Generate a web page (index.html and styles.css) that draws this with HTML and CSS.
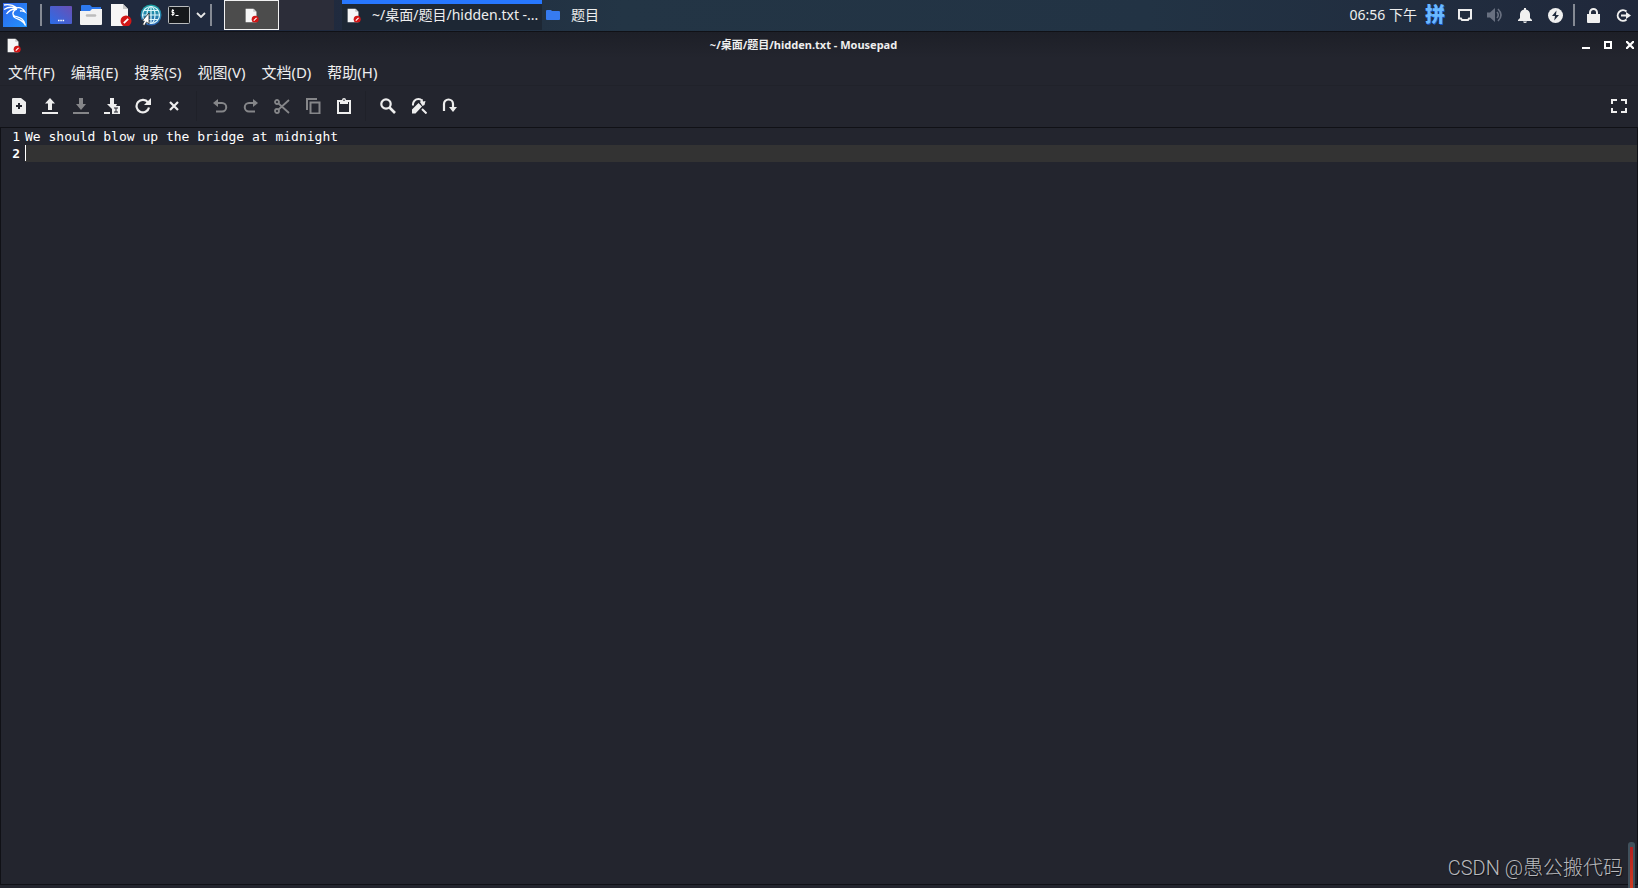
FILE: index.html
```html
<!DOCTYPE html>
<html lang="zh-CN">
<head>
<meta charset="utf-8">
<title>~/桌面/题目/hidden.txt - Mousepad</title>
<link rel="stylesheet" href="styles.css">
</head>
<body>
<svg class="defs" aria-hidden="true">
  <defs>
    <linearGradient id="g-kali" x1="0" y1="0" x2="1" y2="1"><stop offset="0" stop-color="#2e62e8"/><stop offset="1" stop-color="#2295ff"/></linearGradient>
    <linearGradient id="g-desk" x1="0" y1="1" x2="1" y2="0"><stop offset="0" stop-color="#2a6de8"/><stop offset="1" stop-color="#6a4fb4"/></linearGradient>
    <linearGradient id="g-globe" x1="0" y1="0" x2="0" y2="1"><stop offset="0" stop-color="#1ba5a4"/><stop offset="1" stop-color="#2b62b4"/></linearGradient>
    <symbol id="mousepad" viewBox="0 0 22 22">
      <path d="M1 0h12l5 5v17H1z" fill="#f6f6f6"/><path d="M13 0l5 5h-5z" fill="#c9c9c9"/>
      <circle cx="16" cy="17" r="5.5" fill="#d31717"/><path d="M13.8 19.2l4.4-4.4" stroke="#fff" stroke-width="1.8"/>
    </symbol>
  </defs>
</svg>
<header class="panel">
  <div class="launchers">
    <button class="launch" aria-label="Kali"><svg width="24" height="24" viewBox="0 0 24 24"><path d="M0 0h24v24H0z" fill="url(#g-kali)"/><path d="M1 2c5-1 9 0 13 3M1 6.500c4-2.500 8-3 12-1M3.500 11c2-3 5-5 9.500-5M13 5c4-1 7 .5 9 4-2-1.200-3-1.500-5-1M14 6c-4 1-5.500 5-2.500 7 4 1.500 9.500 1.500 11 9.500-2-5-6-5.500-10-7.500-4-2.500-3-7.500 1-9" fill="none" stroke="#fff" stroke-width="1.300"/></svg></button>
    <span class="divider"></span>
    <button class="launch" aria-label="显示桌面"><svg width="22" height="18" viewBox="0 0 22 18"><rect width="22" height="18" rx="1" fill="url(#g-desk)"/><path d="M8 14.500h1.500M10.300 14.500h1.500M12.600 14.500h1.500" stroke="#fff" stroke-width="1.500"/></svg></button>
    <button class="launch" aria-label="文件管理器"><svg width="22" height="20" viewBox="0 0 22 20"><path d="M1 1q0-1 1-1h8l2 2h9v7H1z" fill="#2d79ee"/><path d="M0 6h10l2-2h10v15q0 1-1 1H1q-1 0-1-1z" fill="#f2f2f2"/><path d="M7 10.500h8" stroke="#bcbcbc" stroke-width="2.500" stroke-linecap="round"/></svg></button>
    <button class="launch" aria-label="Mousepad"><svg width="22" height="22"><use href="#mousepad"/></svg></button>
    <button class="launch" aria-label="浏览器"><svg width="22" height="22" viewBox="0 0 22 22"><circle cx="11" cy="11" r="10.500" fill="url(#g-globe)"/><g fill="none" stroke="#d9f5fb" stroke-width="1.200"><circle cx="11" cy="11" r="8.500"/><ellipse cx="11" cy="11" rx="4" ry="8.500"/><path d="M11 2.500v17M2.500 11h17M4 6.500h14M4 15.500h14"/></g><path d="M9 9v11l-2.500-2-2 3.500-2-1 1.800-3.500H2z" fill="#fff" stroke="#222" stroke-width=".8"/></svg></button>
    <button class="launch terminal" aria-label="终端"><svg width="22" height="18" viewBox="0 0 22 18"><rect x=".5" y=".5" width="21" height="17" rx="1" fill="#15181b" stroke="#b9bcbe"/><path d="M6 4.500H4v2h2v2H3.500M4.800 3v7M7.500 9.500h3" fill="none" stroke="#fff"/></svg></button>
    <button class="more" aria-label="更多终端"><svg width="10" height="6" viewBox="0 0 10 6"><path d="M1 1l4 4 4-4" fill="none" stroke="#e8e8e8" stroke-width="1.800"/></svg></button>
    <span class="divider"></span>
  </div>
  <div class="pager">
    <button class="space current" aria-label="工作区 1"><svg width="14" height="15" viewBox="0 0 22 22"><use href="#mousepad"/></svg></button>
    <button class="space" aria-label="工作区 2"></button>
  </div>
  <nav class="tasks">
    <button class="task active"><svg width="14" height="15" viewBox="0 0 22 22"><use href="#mousepad"/></svg><span>~/桌面/题目/hidden.txt -...</span></button>
    <button class="task"><svg width="14" height="10" viewBox="0 0 14 10"><path d="M0 1q0-1 1-1h4l1 1h7q1 0 1 1v7q0 1-1 1H1q-1 0-1-1z" fill="#367bf0"/></svg><span>题目</span></button>
  </nav>
  <div class="tray">
    <time class="clock">06:56 下午</time>
    <button class="pinyin">拼</button>
    <button class="status" aria-label="显示"><svg width="14" height="12" viewBox="0 0 14 12"><path d="M1 1h12v8.500h-2l-1 1.500H4L3 9.500H1z" fill="none" stroke="#eee" stroke-width="2"/></svg></button>
    <button class="status dim" aria-label="音量"><svg width="16" height="14" viewBox="0 0 16 14"><path d="M0 4.500h3L8 0v14L3 9.500H0z" fill="currentColor"/><path d="M10 4q2.500 3 0 6M11 1q6 6 0 12" fill="none" stroke="currentColor" stroke-width="1.600"/></svg></button>
    <button class="status" aria-label="通知"><svg width="14" height="15" viewBox="0 0 14 15"><path d="M6 0h2v1.500c3 .5 4 3 4 5V10l2 2v1H0v-1l2-2V6.500c0-2 1-4.500 4-5zM5 13.500h4Q8.500 15 7 15t-2-1.500z" fill="#f0f0f0"/></svg></button>
    <button class="status" aria-label="电源"><svg width="15" height="15" viewBox="0 0 15 15"><circle cx="7.500" cy="7.500" r="7.500" fill="#f0f0f0"/><path d="M8.500 2.500L4 8h3l-.8 4.500L11 7H8z" fill="#202b3e"/></svg></button>
    <span class="divider"></span>
    <button class="status" aria-label="锁定"><svg width="13" height="15" viewBox="0 0 13 15"><path d="M0 6h13v8q0 1-1 1H1q-1 0-1-1z" fill="#f0f0f0"/><path d="M3 6V4.500a3.500 3.500 0 0 1 7 0V6" fill="none" stroke="#f0f0f0" stroke-width="2"/></svg></button>
    <button class="status" aria-label="注销"><svg width="15" height="13" viewBox="0 0 15 13"><path d="M10.500 2.500A5.300 5.300 0 1 0 10.500 10.500" fill="none" stroke="#f0f0f0" stroke-width="2"/><path d="M5 5.500h5V3l5 3.500-5 3.500V7.500H5z" fill="#f0f0f0"/></svg></button>
  </div>
</header>
<main class="window">
  <div class="titlebar">
    <svg class="app-icon" width="14" height="15" viewBox="0 0 22 22"><use href="#mousepad"/></svg>
    <h1>~/桌面/题目/hidden.txt - Mousepad</h1>
    <div class="controls">
      <button aria-label="最小化"><svg width="8" height="8"><path d="M0 6h8v2H0z"/></svg></button>
      <button aria-label="最大化"><svg width="8" height="8"><path d="M1 1h6v6H1z" fill="none" stroke="#fff" stroke-width="2"/></svg></button>
      <button aria-label="关闭窗口"><svg width="8" height="8"><path d="M0 0l8 8M8 0L0 8" stroke="#fff" stroke-width="2.200"/></svg></button>
    </div>
  </div>
  <nav class="menubar">
    <button>文件(F)</button><button>编辑(E)</button><button>搜索(S)</button><button>视图(V)</button><button>文档(D)</button><button>帮助(H)</button>
  </nav>
  <div class="toolbar" role="toolbar">
    <button aria-label="新建"><svg viewBox="0 0 16 16"><path fill="currentColor" fill-rule="evenodd" d="M2 0h8l5 4v11q0 1-1 1H2q-1 0-1-1V1q0-1 1-1zm5 5v2H5v2h2v2h2V9h2V7H9V5z"/></svg></button>
    <button aria-label="打开"><svg viewBox="0 0 16 16"><path fill="currentColor" d="M8 0l5 5.500h-3V12H6V5.500H3zM0 14h16v2H0z"/></svg></button>
    <button class="dim" aria-label="保存"><svg viewBox="0 0 16 16"><path fill="currentColor" d="M6 0h4v6h3l-5 6-5-6h3zM0 14h16v2H0z"/></svg></button>
    <button aria-label="另存为"><svg viewBox="0 0 16 16"><path fill="currentColor" fill-rule="evenodd" d="M6 0h4v6h3l-1 2H8v3L3 6h3zM0 14h6v2H0zM8 8h8v8H8zm2 1.500v1h1.500v3H10v1h4v-1h-1.500v-3H14v-1z"/></svg></button>
    <button aria-label="重新载入"><svg viewBox="0 0 16 16"><path d="M13 4.500A6.300 6.300 0 1 0 14 9.500" fill="none" stroke="currentColor" stroke-width="2.200"/><path fill="currentColor" d="M16 0v7H9z"/></svg></button>
    <button aria-label="关闭文件"><svg viewBox="0 0 16 16"><path d="M4 4l8 8M12 4l-8 8" stroke="currentColor" stroke-width="2.200"/></svg></button>
    <span class="tool-divider"></span>
    <button class="dim" aria-label="撤销"><svg viewBox="0 0 16 16"><path fill="currentColor" d="M1 5l5-4v8z"/><path d="M5 5h5a4 4 0 0 1 0 8.500H4" fill="none" stroke="currentColor" stroke-width="2"/></svg></button>
    <button class="dim" aria-label="重做"><svg viewBox="0 0 16 16"><path fill="currentColor" d="M15 5l-5-4v8z"/><path d="M11 5H6a4 4 0 0 0 0 8.500h6" fill="none" stroke="currentColor" stroke-width="2"/></svg></button>
    <button class="dim" aria-label="剪切"><svg viewBox="0 0 16 16"><g fill="none" stroke="currentColor" stroke-width="1.800"><circle cx="3" cy="4" r="2"/><circle cx="3" cy="13" r="2"/><path d="M4.500 5.500L15 15M4.500 11.500L15 2"/></g></svg></button>
    <button class="dim" aria-label="复制"><svg viewBox="0 0 16 16"><path d="M2 12V1h10M5.500 4.500h9v11h-9z" fill="none" stroke="currentColor" stroke-width="2"/></svg></button>
    <button aria-label="粘贴"><svg viewBox="0 0 16 16"><path d="M2 3h12v12H2z" fill="none" stroke="currentColor" stroke-width="2"/><path fill="currentColor" d="M4 2h2a2 2 0 0 1 4 0h2v4H4z"/><circle cx="8" cy="2.200" r=".8" fill="#23252e"/></svg></button>
    <span class="tool-divider short"></span>
    <button aria-label="查找"><svg viewBox="0 0 16 16"><circle cx="6" cy="6" r="4.700" fill="none" stroke="currentColor" stroke-width="2.200"/><path d="M9.500 9.500l5.500 5.500" stroke="currentColor" stroke-width="2.600"/></svg></button>
    <button aria-label="替换"><svg viewBox="0 0 16 16"><path d="M2 7.500C1.500 3.500 4.500 1 7.500 1q2 0 3.500 1.500M11 11l4.500 4.500" fill="none" stroke="currentColor" stroke-width="2"/><path fill="currentColor" d="M1 15.500v-4l6.500-6.500 3.500 3.500-6.500 7zM9 4l2.500-3 .5 2.500 2.500-.5-1 4-2 1z"/></svg></button>
    <button aria-label="跳转"><svg viewBox="0 0 16 16"><path d="M2 13V6a4.500 4.500 0 0 1 9 0v5" fill="none" stroke="currentColor" stroke-width="2.200"/><path fill="currentColor" d="M7 9h8l-4 5z"/></svg></button>
    <button class="fullscreen" aria-label="全屏"><svg viewBox="0 0 16 16"><path d="M1 6V2h5M10 2h5v4M15 10v4h-5M6 14H1v-4" fill="none" stroke="currentColor" stroke-width="2"/></svg></button>
  </div>
  <section class="editor" aria-label="文本">
    <div class="line"><span class="number">1</span><code>We should blow up the bridge at midnight</code></div>
    <div class="line selected"><span class="number">2</span><code><i class="caret"></i></code></div>
  </section>
</main>
<div class="watermark">CSDN @愚公搬代码</div>
<div class="meter"></div>
</body>
</html>
```

FILE: styles.css
```css
* { box-sizing: border-box; }
body {
  margin: 0;
  min-height: 100vh;
  display: flex;
  flex-direction: column;
  background: #23252e;
  color: #eee;
  font: 15px/20px "Noto Sans", "Noto Sans CJK SC", sans-serif;
}
button {
  display: flex;
  align-items: center;
  justify-content: center;
  padding: 0;
  border: 0;
  background: none;
  color: inherit;
  font: inherit;
}
svg { display: block; flex: none; }
.defs { position: absolute; width: 0; height: 0; }
.panel {
  display: flex;
  height: 32px;
  border-bottom: 1px solid #101116;
  background: linear-gradient(90deg, #202a3e, #202a3e 20%, #233545 38%, #223344 70%, #20283b);
  font-size: 14px;
}
.launchers, .tray { display: flex; align-items: center; height: 30px; }
.launch { width: 30px; height: 29px; }
.terminal { width: 26px; }
.divider { width: 2px; height: 22px; margin: 0 4px 0 10px; background: #858a94; }
.more { width: 18px; height: 29px; }
.more + .divider { margin: 0 12px 0 0; }
.pager { display: flex; height: 30px; }
.space { width: 55px; }
.space:last-child { background: #2c2d39; }
.current { border: 1px solid #f2f2f2; background: #4c4c4c; }
.tasks { display: flex; flex: 1; height: 30px; margin-left: 8px; }
.task { gap: 11px; padding: 0 4px; white-space: nowrap; }
.active {
  width: 200px;
  justify-content: flex-start;
  padding: 0 0 0 5px;
  background: #1d2734;
  box-shadow: inset 0 4px #2777ff;
}
.clock { margin-right: 8px; }
.pinyin {
  width: 20px;
  margin-right: 5px;
  color: #69b9ff;
  font-size: 20px;
  font-weight: 900;
  text-shadow: 1px 1px #1555c7;
}
.status { width: 30px; height: 29px; }
.dim { color: #858689; }
.status.dim { color: #687080; }
.tray .divider { margin: 0 3px; }
.window { display: flex; flex: 1; flex-direction: column; }
.titlebar {
  display: grid;
  grid-template-columns: 60px 1fr 60px;
  align-items: center;
  height: 26px;
  padding: 0 4px 0 7px;
  background: linear-gradient(#1d1f27, #23252e);
}
h1 { margin: 0; padding-right: 34px; font-size: 11px; line-height: 20px; text-align: center; }
.controls { display: flex; justify-content: flex-end; gap: 14px; }
.controls svg { fill: #fff; }
.menubar { display: flex; gap: 16px; height: 28px; padding: 0 8px; border-bottom: 1px solid #20222a; }
.toolbar { display: flex; align-items: center; height: 41px; padding: 0 4px 1px 3px; }
.toolbar button { width: 31px; height: 38px; }
.toolbar svg { width: 16px; height: 16px; }
.tool-divider { width: 1px; height: 30px; margin: 0 7px; background: #1f2129; }
.short { margin: 0 6px; }
.toolbar .fullscreen { margin-left: auto; }
.editor {
  flex: 1;
  margin-bottom: 3px;
  border: 1px solid #101116;
  color: #fff;
  font: 13px/17px "DejaVu Sans Mono", monospace;
}
.line { display: flex; height: 17px; }
.number { width: 24px; padding-right: 5px; text-align: right; }
code { flex: 1; font: inherit; }
.selected code { background: #333; }
.selected .number { font-weight: 700; }
.caret { display: block; width: 1px; height: 16px; background: #fff; }
.watermark {
  position: absolute;
  right: 15px;
  bottom: 8px;
  color: #b9babd;
  font: 20px/24px Roboto, "Noto Sans CJK SC", sans-serif;
  font-weight: 300;
  text-shadow: 1px 1px 1px #101116;
}
.meter {
  position: absolute;
  right: 3px;
  bottom: 0;
  width: 7px;
  height: 46px;
  border: 2px solid #40515c;
  border-top-width: 5px;
  border-bottom: 0;
  border-radius: 3px 3px 0 0;
  background: linear-gradient(#b51e1e, #cf3b20);
}
```
